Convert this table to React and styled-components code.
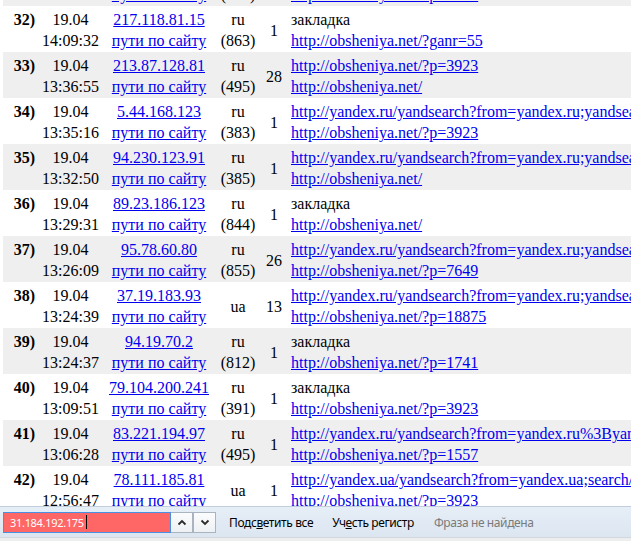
import React from "react";
import styled, { createGlobalStyle } from "styled-components";

const Global = createGlobalStyle`
  html, body { margin: 0; padding: 0; background: #fff; overflow: hidden; }
  #root { width: 631px; height: 541px; }
`;

const Screen = styled.div`
  width: 631px;
  height: 541px;
  display: flex;
  flex-direction: column;
  overflow: hidden;
`;

const Viewport = styled.div`
  flex: 1;
  min-height: 0;
  overflow: hidden;
  padding-left: 3px;
`;

const List = styled.div`
  margin-top: -40px;
  display: flex;
  flex-direction: column;
  font-family: "Liberation Serif", "Times New Roman", serif;
  font-size: 16px;
  line-height: 21px;
  color: #000;
`;

const Row = styled.div`
  display: grid;
  grid-template-columns: 37px 61px 116px 42px 30px 1fr;
  height: 46px;
  box-sizing: border-box;
  padding: 3px 0 1px;
  background: ${(p) => (p.$alt ? "#efefef" : "#ffffff")};
  white-space: nowrap;
`;

const NumCell = styled.div`
  text-align: right;
  padding-right: 5px;
  font-weight: bold;
`;

const CenterCell = styled.div`
  display: flex;
  flex-direction: column;
  align-items: center;
  justify-content: ${(p) => (p.$middle ? "center" : "flex-start")};
`;

const UrlCell = styled.div`
  display: flex;
  flex-direction: column;
  padding-left: 2px;
  overflow: hidden;
`;

const Link = styled.a`
  color: #0000ee;
  text-decoration: underline;
  cursor: pointer;
`;

const FindBar = styled.div`
  flex: none;
  height: 31px;
  box-sizing: border-box;
  border-top: 1px solid #c2cedb;
  background: linear-gradient(#e6eef7, #dce6f1);
  display: flex;
  align-items: center;
  padding: 0 3px;
  font-family: "Noto Sans", "Open Sans", sans-serif;
  font-size: 12px;
`;

const BottomStrip = styled.div`
  flex: none;
  height: 3px;
  background: #eceef0;
  border-top: 1px solid #d4d8dc;
`;

const Field = styled.div`
  width: 168px;
  height: 21px;
  box-sizing: border-box;
  border: 1px solid #4a90e2;
  background: #ff6666;
  color: #fff;
  display: flex;
  align-items: center;
  padding-left: 6px;
  font-size: 11px;
  letter-spacing: -0.3px;
`;

const Caret = styled.span`
  display: inline-block;
  width: 1px;
  height: 14px;
  background: #000;
  margin-left: 2px;
`;

const NavButton = styled.button`
  width: ${(p) => p.$w}px;
  height: 21px;
  box-sizing: border-box;
  margin: 0;
  padding: 0;
  border: 1px solid #a9b4c0;
  border-left: ${(p) => (p.$joined ? "none" : "1px solid #a9b4c0")};
  background: linear-gradient(#fbfcfd, #eef1f4);
  display: flex;
  align-items: center;
  justify-content: center;
`;

const Toggle = styled.span`
  color: ${(p) => (p.$muted ? "#7a7a7a" : "#000")};
  margin-left: ${(p) => p.$gap}px;
  white-space: nowrap;
  letter-spacing: -0.4px;
`;

const U = styled.span`
  text-decoration: underline;
`;

const Chevron = ({ up }) => (
  <svg width="10" height="7" viewBox="0 0 10 7">
    <path
      d={up ? "M1.5 5.5 L5 2 L8.5 5.5" : "M1.5 1.5 L5 5 L8.5 1.5"}
      fill="none"
      stroke="#2b2b2b"
      strokeWidth="1.8"
    />
  </svg>
);

const rows = [
  { n: 31, t: "13:42:18", ip: "46.118.62.14", cc: "ru", v: "(512)", c: "1", u: [null, "http://obsheniya.net/?p=3923"] },
  { n: 32, t: "14:09:32", ip: "217.118.81.15", cc: "ru", v: "(863)", c: "1", u: [null, "http://obsheniya.net/?ganr=55"] },
  { n: 33, t: "13:36:55", ip: "213.87.128.81", cc: "ru", v: "(495)", c: "28", u: ["http://obsheniya.net/?p=3923", "http://obsheniya.net/"] },
  { n: 34, t: "13:35:16", ip: "5.44.168.123", cc: "ru", v: "(383)", c: "1", u: ["http://yandex.ru/yandsearch?from=yandex.ru;yandsearch;web;;&text=obsheniya", "http://obsheniya.net/?p=3923"] },
  { n: 35, t: "13:32:50", ip: "94.230.123.91", cc: "ru", v: "(385)", c: "1", u: ["http://yandex.ru/yandsearch?from=yandex.ru;yandsearch;web;;&text=obsheniya", "http://obsheniya.net/"] },
  { n: 36, t: "13:29:31", ip: "89.23.186.123", cc: "ru", v: "(844)", c: "1", u: [null, "http://obsheniya.net/"] },
  { n: 37, t: "13:26:09", ip: "95.78.60.80", cc: "ru", v: "(855)", c: "26", u: ["http://yandex.ru/yandsearch?from=yandex.ru;yandsearch;web;;&text=obsheniya", "http://obsheniya.net/?p=7649"] },
  { n: 38, t: "13:24:39", ip: "37.19.183.93", cc: "ua", v: null, c: "13", u: ["http://yandex.ru/yandsearch?from=yandex.ru;yandsearch;web;;&text=obsheniya", "http://obsheniya.net/?p=18875"] },
  { n: 39, t: "13:24:37", ip: "94.19.70.2", cc: "ru", v: "(812)", c: "1", u: [null, "http://obsheniya.net/?p=1741"] },
  { n: 40, t: "13:09:51", ip: "79.104.200.241", cc: "ru", v: "(391)", c: "1", u: [null, "http://obsheniya.net/?p=3923"] },
  { n: 41, t: "13:06:28", ip: "83.221.194.97", cc: "ru", v: "(495)", c: "1", u: ["http://yandex.ru/yandsearch?from=yandex.ru%3Byandsearch%3Bweb%3B%3B&text=obsheniya", "http://obsheniya.net/?p=1557"] },
  { n: 42, t: "12:56:47", ip: "78.111.185.81", cc: "ua", v: null, c: "1", u: ["http://yandex.ua/yandsearch?from=yandex.ua;search/;web;;&text=obsheniya", "http://obsheniya.net/?p=3923"] },
];

export default function App() {
  return (
    <>
      <Global />
      <Screen>
        <Viewport>
          <List>
            {rows.map((r) => (
              <Row key={r.n} $alt={r.n % 2 === 1}>
                <NumCell>{r.n})</NumCell>
                <CenterCell>
                  <span>19.04</span>
                  <span>{r.t}</span>
                </CenterCell>
                <CenterCell>
                  <Link>{r.ip}</Link>
                  <Link>пути по сайту</Link>
                </CenterCell>
                <CenterCell $middle={!r.v}>
                  <span>{r.cc}</span>
                  {r.v && <span>{r.v}</span>}
                </CenterCell>
                <CenterCell $middle>
                  <span>{r.c}</span>
                </CenterCell>
                <UrlCell>
                  {r.u[0] ? <span><Link>{r.u[0]}</Link></span> : <span>закладка</span>}
                  <span><Link>{r.u[1]}</Link></span>
                </UrlCell>
              </Row>
            ))}
          </List>
        </Viewport>
        <FindBar>
          <Field>
            31.184.192.175
            <Caret />
          </Field>
          <NavButton $w={22} $joined>
            <Chevron up />
          </NavButton>
          <NavButton $w={23}>
            <Chevron />
          </NavButton>
          <Toggle $gap={13}>
            Подс<U>в</U>етить все
          </Toggle>
          <Toggle $gap={19}>
            Уч<U>е</U>сть регистр
          </Toggle>
          <Toggle $gap={20} $muted>
            Фраза не найдена
          </Toggle>
        </FindBar>
        <BottomStrip />
      </Screen>
    </>
  );
}
